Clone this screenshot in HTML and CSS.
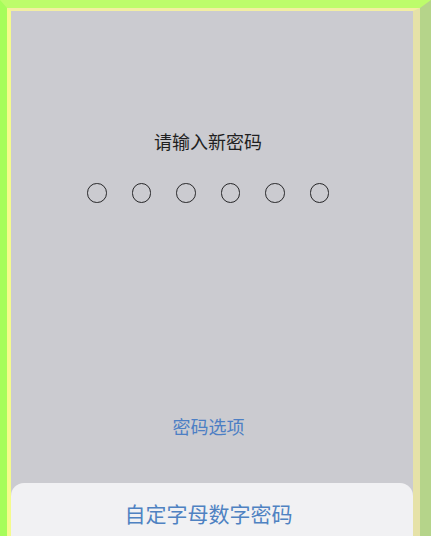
FILE: index.html
```html
<!DOCTYPE html>
<html lang="zh">
<head>
<meta charset="utf-8">
<link rel="stylesheet" href="styles.css">
</head>
<body>
<div class="frame">
  <div class="inner">
    <div class="screen">
      <div class="title">请输入新密码</div>
      <div class="dots">
        <span class="dot"></span><span class="dot"></span><span class="dot"></span><span class="dot"></span><span class="dot"></span><span class="dot"></span>
      </div>
      <div class="options">密码选项</div>
      <div class="sheet">
        <div class="sheet-item">自定字母数字密码</div>
      </div>
    </div>
  </div>
</div>
</body>
</html>
```
FILE: styles.css
```css
html, body {
  margin: 0;
  padding: 0;
  overflow: hidden;
}
body {
  width: 431px;
  height: 536px;
  font-family: "Noto Sans CJK SC", "Noto Sans", sans-serif;
}
.frame {
  box-sizing: border-box;
  width: 431px;
  height: 536px;
  border-top: 8px solid #bdfc6b;
  border-left: 7px solid #a6fd5a;
  border-right: 11px solid #b5d48a;
  background: #bdfc6b;
}
.inner {
  box-sizing: border-box;
  height: 100%;
  border-top: 3px solid #f3eea2;
  border-left: 4px solid #f4fb8c;
  border-right: 7px solid #e6e2a8;
}
.screen {
  height: 100%;
  background: #cbcbd0;
  display: flex;
  flex-direction: column;
  align-items: center;
  overflow: hidden;
}
.title {
  margin-top: 120px;
  margin-right: 8px;
  font-size: 18px;
  line-height: 20px;
  color: #1f1f21;
}
.dots {
  margin-top: 32px;
  margin-right: 8px;
  display: flex;
  gap: 25px;
}
.dot {
  box-sizing: border-box;
  width: 19.5px;
  height: 19.5px;
  border: 1.5px solid #262628;
  border-radius: 50%;
}
.options {
  margin-top: 213px;
  margin-right: 7px;
  font-size: 18px;
  line-height: 20px;
  color: #4d7fc4;
}
.sheet {
  margin-top: 47.5px;
  align-self: stretch;
  flex: 1;
  background: #f1f1f3;
  border-radius: 13px 13px 0 0;
  display: flex;
  justify-content: center;
}
.sheet-item {
  margin-top: 17.5px;
  margin-right: 7px;
  font-size: 21px;
  line-height: 24px;
  color: #4f82c2;
}
```
